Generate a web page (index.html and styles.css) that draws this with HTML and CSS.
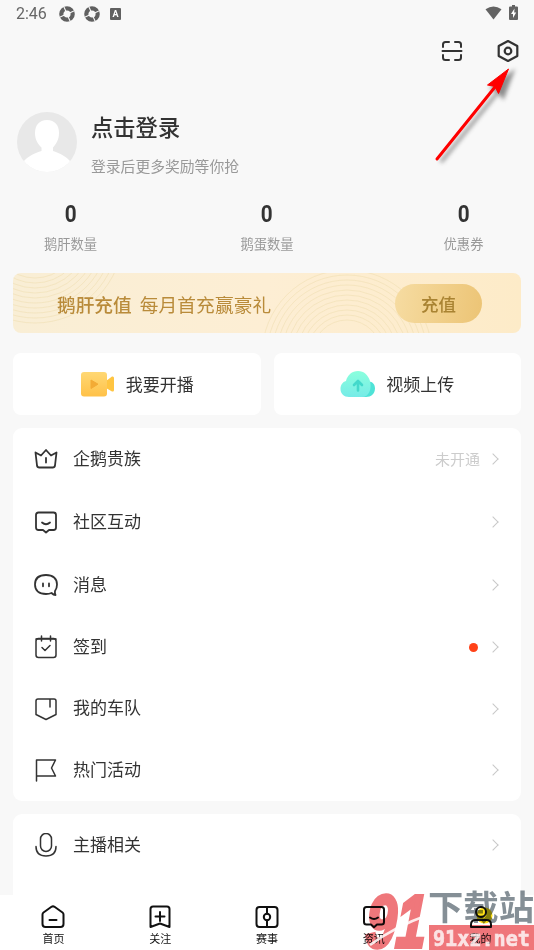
FILE: index.html
```html
<!DOCTYPE html>
<html lang="zh-CN">
<head>
<meta charset="utf-8">
<title>我的</title>
<link rel="stylesheet" href="styles.css">
</head>
<body>
<div class="screen">
  <header class="status">
    <span class="clock">2:46</span>
    <svg class="ring" viewBox="0 0 16 16"><circle cx="8" cy="8" r="5.700"/><path d="M4.500 0l2.500 5.500M16 4.500L10.500 7M11.500 16L9 10.500M0 11.500L5.500 9"/></svg>
    <svg class="ring" viewBox="0 0 16 16"><circle cx="8" cy="8" r="5.700"/><path d="M4.500 0l2.500 5.500M16 4.500L10.500 7M11.500 16L9 10.500M0 11.500L5.500 9"/></svg>
    <span class="abox">A</span>
    <svg class="wifi" viewBox="0 0 18 14"><path d="M0.5 3Q9-3 17.500 3L9 14Z"/></svg>
    <svg class="battery" viewBox="0 0 9 15"><path d="M3 0h3v1.500h2q1 0 1 1V14q0 1-1 1H1q-1 0-1-1V2.500q0-1 1-1h2z"/><path class="bolt" d="M5.500 3.500L2 9h2v4l3.200-5.500h-2z"/></svg>
  </header>

  <div class="tools">
    <svg class="icon" viewBox="0 0 24 24"><path d="M3 8V5.500Q3 3 5.500 3H9M15 3h3.500Q21 3 21 5.500V8M21 16v2.500Q21 21 18.500 21H15M9 21H5.500Q3 21 3 18.500V16M2.500 12h19"/></svg>
    <svg class="icon gear" viewBox="0 0 24 24"><path d="M12 2l9.300 5v10L12 22l-9.300-5V7z"/><circle cx="12" cy="12" r="3.300"/></svg>
  </div>

  <section class="profile">
    <svg class="avatar" viewBox="0 0 60 60"><defs><clipPath id="face"><circle cx="30" cy="30" r="30"/></clipPath></defs><g clip-path="url(#face)"><rect width="60" height="60" fill="#e8e8e8"/><path fill="#fff" d="M30 8c8 0 12 5.500 12 13 0 7-3 11-6 14.500v3.500c6 2 13 5 18 11v10H6V50c5-6 12-9 18.500-11v-3.500C21 32 18 28 18 21c0-7.500 4-13 12-13z"/></g></svg>
    <div class="who"><h1>点击登录</h1><p>登录后更多奖励等你抢</p></div>
  </section>

  <section class="stats">
    <div class="stat"><b>0</b><span>鹅肝数量</span></div>
    <div class="stat"><b>0</b><span>鹅蛋数量</span></div>
    <div class="stat"><b>0</b><span>优惠券</span></div>
  </section>

  <section class="banner">
    <svg class="waves" viewBox="0 0 508 60">
      <g><circle cx="22" cy="-38" r="43"/><circle cx="22" cy="-38" r="48"/><circle cx="22" cy="-38" r="53"/><circle cx="22" cy="-38" r="58"/><circle cx="22" cy="-38" r="63"/><circle cx="22" cy="-38" r="68"/><circle cx="22" cy="-38" r="73"/><circle cx="22" cy="-38" r="78"/><circle cx="22" cy="-38" r="83"/><circle cx="22" cy="-38" r="88"/></g>
      <g><circle cx="334" cy="82" r="35"/><circle cx="334" cy="82" r="40"/><circle cx="334" cy="82" r="45"/><circle cx="334" cy="82" r="50"/><circle cx="334" cy="82" r="55"/><circle cx="334" cy="82" r="60"/><circle cx="334" cy="82" r="65"/><circle cx="334" cy="82" r="70"/><circle cx="334" cy="82" r="75"/><circle cx="334" cy="82" r="80"/><circle cx="334" cy="82" r="85"/></g>
    </svg>
    <strong>鹅肝充值</strong><span class="promo">每月首充赢豪礼</span>
    <button class="charge">充值</button>
  </section>

  <section class="actions">
    <div class="action">
      <svg class="action-icon" viewBox="0 0 36 28"><defs><linearGradient id="cam" x2="0" y2="1"><stop stop-color="#ffd874"/><stop offset="1" stop-color="#ffc148"/></linearGradient></defs><path fill="#ffc542" d="M26 11l6-4.500q2-.5 2 1.500v12q0 2-2 1.500L26 18z"/><rect x="1" y="2" width="26" height="24.500" rx="3" fill="url(#cam)"/><path fill="#f3ab35" stroke="#f3ab35" stroke-linejoin="round" d="M11 10l7 4.200-7 4.300z"/></svg>
      <span>我要开播</span>
    </div>
    <div class="action">
      <svg class="action-icon" viewBox="0 0 36 28"><defs><linearGradient id="cloud" x2="0" y2="1"><stop stop-color="#8affdd"/><stop offset="1" stop-color="#76ebe7"/></linearGradient></defs><path fill="#4fe3d7" d="M25 12c7-2 10 2 10 6.500 0 5-4 8.500-9 8.500h-9z"/><path fill="url(#cloud)" d="M9 27c-5 0-8.500-3.500-8.500-8 0-4 2-7 5.500-8C7.500 5 12 1 18 1s10 4 12 10c2 8-1 16-8 16z"/><path fill="none" stroke="#43d9cb" stroke-width="2.600" stroke-linecap="round" stroke-linejoin="round" d="M18 20.500V11M14 15l4-4 4 4"/></svg>
      <span>视频上传</span>
    </div>
  </section>

  <section class="card menu">
    <div class="row"><svg class="icon" viewBox="0 0 24 24"><path d="M1.500 5.500L7 8.500 12 3l5 5.500 5.500-3-1.500 13q-.3 2-2.300 2H5.300q-2 0-2.300-2zM12 11v4.500"/></svg><span class="name">企鹅贵族</span><span class="note">未开通</span><i class="arrow"></i></div>
    <div class="row"><svg class="icon" viewBox="0 0 24 24"><path d="M4.500 2.500h15q2.500 0 2.500 2.500v12.500q0 2.500-2.500 2.500H15l-3 2.500L9 20H4.500Q2 20 2 17.500V5q0-2.500 2.500-2.500zM8 12.500q4 3.500 8 0"/></svg><span class="name">社区互动</span><i class="arrow"></i></div>
    <div class="row"><svg class="icon" viewBox="0 0 24 24"><path d="M21 18q2-2.500 2-6.500C23 5.500 19 2 12 2S1 5.500 1 11.500 5 21 12 21c2.500 0 4-.3 5.500-1 1.500 1.500 3 2 4 2-.5-1-.8-2.500-.5-4zM9 10.500v2.800M15 10.500v2.800"/></svg><span class="name">消息</span><i class="arrow"></i></div>
    <div class="row short"><svg class="icon thin" viewBox="0 0 24 24"><rect x="2" y="3.500" width="20" height="19" rx="2.500"/><path d="M2 4h20M7.500 1v5M16.500 1v5M8 12.500l3 3 5-5"/></svg><span class="name">签到</span><i class="dot"></i><i class="arrow"></i></div>
    <div class="row team"><svg class="icon thin" viewBox="0 0 24 24"><path d="M4 2h16q2 0 2 2v13.500L12 22.500 2 17.500V4q0-2 2-2zM16 2v8"/></svg><span class="name">我的车队</span><i class="arrow"></i></div>
    <div class="row short"><svg class="icon thin" viewBox="0 0 24 24"><path d="M2.500 23V2h19l-4 8 4 8h-19"/></svg><span class="name">热门活动</span><i class="arrow"></i></div>
  </section>

  <section class="card host">
    <div class="row short"><svg class="icon thin" viewBox="0 0 24 24"><rect x="6.500" y=".5" width="11" height="18" rx="5.500"/><path d="M2 13.500q0 9.500 10 9.500t10-9.500"/></svg><span class="name">主播相关</span><i class="arrow"></i></div>
  </section>

  <nav class="tabs">
    <div class="tab"><svg class="icon" viewBox="0 0 24 24"><path d="M1.500 9.500q0-1.200 1-2L10.500 1.800q1.500-1 3 0l8 5.700q1 .8 1 2V19q0 3-3 3h-15q-3 0-3-3zM8.500 15h7"/></svg><span>首页</span></div>
    <div class="tab"><svg class="icon" viewBox="0 0 24 24"><path d="M2.500 22V4q0-2.500 2.500-2.500h14q2.500 0 2.500 2.500v18L12 18.500zM12 7v9M7.500 11.500h9"/></svg><span>关注</span></div>
    <div class="tab"><svg class="icon" viewBox="0 0 24 24"><rect x="1.500" y="2" width="21" height="20" rx="3"/><circle cx="12" cy="12" r="3.200"/><path d="M12 2v6.800M12 15.200V22"/></svg><span>赛事</span></div>
    <div class="tab"><svg class="icon" viewBox="0 0 24 24"><path d="M4.500 2h15q2.500 0 2.500 2.500V17q0 2.500-2.500 2.500H15l-3 2.800-3-2.800H4.500Q2 19.500 2 17V4.500Q2 2 4.500 2zM8 12.500q4 3 8 0"/></svg><span>资讯</span></div>
    <div class="tab"><svg class="icon" viewBox="0 0 24 24"><circle class="glow" cx="15.500" cy="10.500" r="8"/><circle cx="12" cy="7" r="5"/><path d="M2 22v-2.500Q2 15 6.500 15h11q4.500 0 4.500 4.500V22z"/></svg><span>我的</span></div>
  </nav>

  <svg class="pointer" viewBox="0 0 100 110"><g class="pointer-shadow"><path d="M11 96L68 26M82 7L62 22l6 2 5 7z"/></g><path class="shaft" d="M7 93L65 21"/><path class="head" d="M78.500 3L57.500 19l7.500 1.500 3.500 7z"/></svg>

  <svg class="watermark tint" viewBox="0 0 170 60">
    <text class="logo" x="4" y="57" transform="skewX(-3)" textLength="60" lengthAdjust="spacingAndGlyphs">91</text>
    <text class="site-name" x="64" y="30" textLength="106" lengthAdjust="spacingAndGlyphs">下载站</text>
    <rect x="65" y="35" width="105" height="25"/>
  </svg>
  <svg class="watermark" viewBox="0 0 170 60">
    <path class="cut" d="M6 55Q32 36 64 25"/>
    <text class="site-url" x="69" y="56" textLength="97" lengthAdjust="spacingAndGlyphs">91xz.net</text>
  </svg>
</div>
</body>
</html>
```

FILE: styles.css
```css
* { box-sizing: border-box; }
body { margin: 0; font-family: "Noto Sans CJK SC", sans-serif; color: #333; }
.screen { position: relative; width: 534px; height: 950px; overflow: hidden; background: #f8f8f8; display: flex; flex-direction: column; }
.screen > * { flex-shrink: 0; }
.icon { width: 24px; height: 24px; fill: none; stroke: #333; stroke-width: 1.8; stroke-linecap: round; stroke-linejoin: round; }
.thin { stroke-width: 1.5; }

.status { height: 28px; padding: 0 16px; display: flex; align-items: center; }
.clock { width: 43px; font: 16px/28px Roboto, sans-serif; color: #666; }
.ring { width: 16px; height: 16px; margin-right: 9px; }
.ring circle { fill: none; stroke: #606060; stroke-width: 4.2; }
.ring path { stroke: #f8f8f8; stroke-width: 1.1; }
.abox { width: 11px; height: 12px; margin-left: 1px; border-radius: 1px; background: #606060; color: #fff; font: bold 9px/12px Roboto, sans-serif; text-align: center; }
.wifi { width: 17px; height: 14px; margin-left: auto; margin-right: 7px; margin-bottom: 2px; fill: #636363; }
.battery { width: 9px; height: 15px; margin-bottom: 3px; fill: #636363; }
.bolt { fill: #fff; }

.tools { height: 46px; padding: 0 14px; display: flex; justify-content: flex-end; align-items: center; gap: 32px; }
.tools .icon { stroke-width: 2; }
.tools .gear { stroke-width: 2.2; }

.profile { height: 100px; margin-top: 24px; padding: 14px 17px; display: flex; gap: 14px; }
.avatar { width: 60px; height: 60px; }
h1 { margin: -2px 0 0; font-size: 22.300px; line-height: 32px; font-weight: 500; }
.who p { margin: 13px 0 0; font-size: 14.800px; line-height: 22px; color: #999; }

.stats { height: 75px; padding: 0 13px; display: flex; justify-content: space-between; }
.stat { width: 115px; display: flex; flex-direction: column; align-items: center; }
.stat b { margin-top: 2px; font: bold 23px/29px Roboto, sans-serif; transform: scaleX(.9); }
.stat span { margin-top: 5px; font-size: 13.300px; line-height: 20px; color: #999; }

.banner { position: relative; height: 60px; margin: 0 13px; padding: 0 39px 0 44px; display: flex; align-items: center; border-radius: 8px; overflow: hidden; background: linear-gradient(90deg, #f9eed5, #fdeed4 50%, #fdebc8); color: #b98b3a; font-size: 18.700px; }
.waves { position: absolute; inset: 0; }
.waves circle { fill: none; stroke: #eedcae; stroke-width: .7; opacity: .75; }
.banner strong, .promo { position: relative; font-weight: 500; padding-top: 1px; }
.promo { margin-left: 8px; font-weight: 400; letter-spacing: .1px; }
.charge { position: relative; width: 87px; height: 39px; margin-left: auto; padding: 0; border: 0; border-radius: 20px; background: linear-gradient(100deg, #f6dca2, #ecc475); color: #a98332; font: 500 17.500px "Noto Sans CJK SC", sans-serif; }

.actions { margin: 20px 13px 13px; height: 62px; display: flex; gap: 13px; }
.action { flex: 1; display: flex; align-items: center; justify-content: center; gap: 10px; background: #fff; border-radius: 8px; font-size: 17px; }
.action span { margin-bottom: 2px; }
.action-icon { width: 36px; height: 28px; }

.card { margin: 0 13px; background: #fff; border-radius: 9px; }
.menu { height: 373px; margin-bottom: 13px; }
.host { height: 130px; }
.row { height: 63px; padding: 0 22px 2px 21px; display: flex; align-items: center; font-size: 17px; }
.short { height: 62px; }
.team { height: 61px; }
.host .row { padding-bottom: 0; }
.name { margin: 0 auto 2px 15px; }
.short .name, .team .name { margin-bottom: 4px; }
.note { margin-right: 9px; margin-bottom: 1px; font-size: 15px; color: #ccc; }
.dot { width: 9px; height: 9px; margin-right: 11px; border-radius: 50%; background: #ff4218; }
.arrow { width: 8px; height: 8px; margin-right: 2px; border: solid #c8c8c8; border-width: 1.500px 1.500px 0 0; transform: rotate(45deg); }

.tabs { position: absolute; left: 0; right: 0; bottom: 0; height: 55px; display: flex; background: #fff; }
.tab { flex: 1; padding-top: 10px; display: flex; flex-direction: column; align-items: center; font-size: 11px; line-height: 16px; color: #111; }
.tab span { margin-top: 1px; }
.tab .icon { stroke: #111; stroke-width: 2; }
.icon .glow { fill: #fedf17; stroke: none; }

.pointer { position: absolute; left: 430px; top: 66px; width: 100px; height: 110px; overflow: visible; }
.pointer-shadow { fill: #444; stroke: #444; stroke-width: 3; filter: blur(2px); opacity: .6; }
.shaft { stroke: #f00; stroke-width: 3; stroke-linecap: round; }
.head { fill: #f00; stroke: #f00; stroke-linejoin: round; }

.watermark { position: absolute; left: 364px; top: 890px; width: 170px; height: 60px; }
.tint { mix-blend-mode: multiply; }
.watermark rect { fill: #ef767a; }
.logo { font: italic bold 74px "Liberation Sans", sans-serif; fill: #ef777b; stroke: #ef777b; stroke-width: 4; }
.cut { fill: none; stroke: #fff; stroke-width: 2.5; opacity: .85; }
.site-name { font: 700 34px "Noto Sans CJK SC", sans-serif; fill: #858f96; }
.site-url { font: bold 21px "DejaVu Sans Mono", monospace; fill: #fff; stroke: #fff; stroke-width: .6; opacity: .8; }
```
